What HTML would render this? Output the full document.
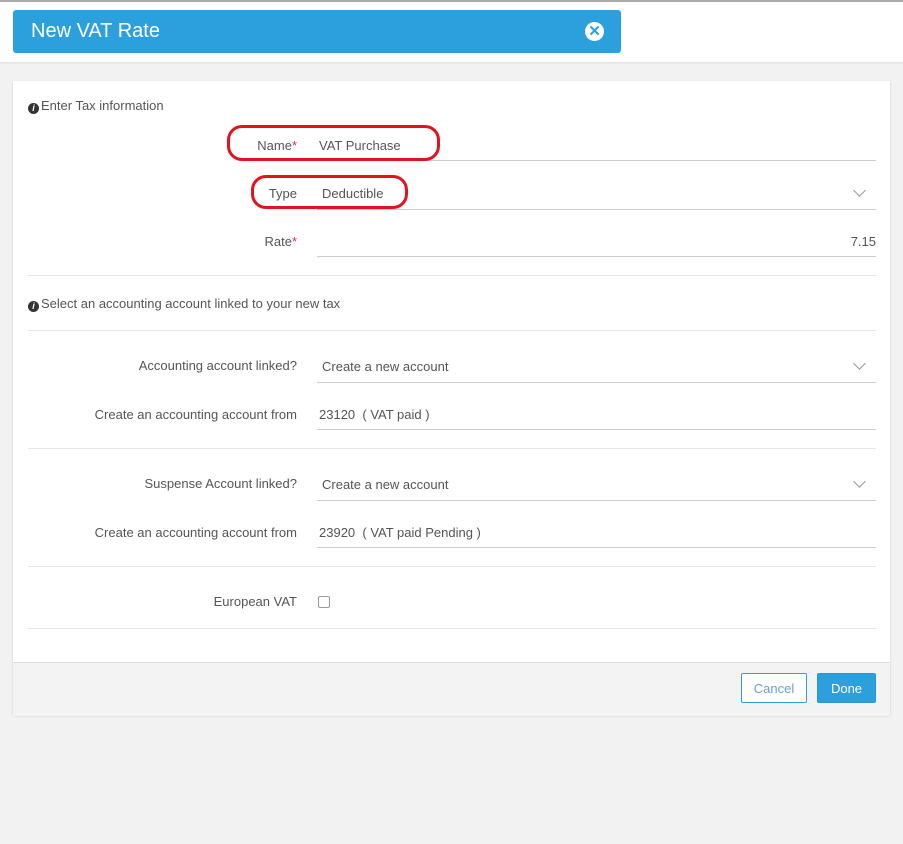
<!DOCTYPE html>
<html><head><style>
body{margin:0;width:903px;height:844px;background:#f2f2f2;font-family:"Liberation Sans",sans-serif;font-size:13px;color:#555;position:relative;overflow:hidden}
.top{position:absolute;left:0;top:0;width:903px;height:62px;background:#fff;border-top:2px solid #aaa;box-sizing:border-box;box-shadow:0 1px 2px #ddd}
.hdr{position:absolute;left:13px;top:10px;width:608px;height:43px;background:#2ca0dd;border-radius:3px;color:#fff;font-size:20px;line-height:43px;padding-left:18px;box-sizing:border-box}
.x{position:absolute;right:17px;top:12px;width:19px;height:19px;border-radius:50%;background:#fff;color:#2ca0dd;font-size:15px;line-height:19px;text-align:center;font-weight:bold}
.card{position:absolute;left:13px;top:81px;width:877px;height:634px;background:#fff;box-shadow:0 1px 2px #ccc}
.foot{position:absolute;left:0;top:581px;width:877px;height:53px;background:#f3f3f3;border-top:1px solid #ddd}
.a{position:absolute}
.lbl{position:absolute;right:593px;text-align:right;white-space:nowrap}
.val{position:absolute;left:309px;white-space:nowrap}
.ul{position:absolute;left:304px;width:559px;height:1px;background:#ccc}
.sep{position:absolute;left:15px;width:848px;height:1px;background:#e6e6e6}
.chev{position:absolute;left:842px;width:8px;height:8px;border-right:1px solid #999;border-bottom:1px solid #999;transform:rotate(45deg)}
.info{display:inline-block;width:11px;height:11px;border-radius:50%;background:#333;color:#fff;font-size:9px;line-height:11px;text-align:center;font-weight:bold;font-style:italic;vertical-align:-1px;margin-right:2px}
.req{color:#d9303a}
.ell{position:absolute;border:3px solid #e0141e;border-radius:15px}
.btn{position:absolute;top:592px;height:30px;line-height:30px;text-align:center;border-radius:2px;box-sizing:border-box}
</style></head><body>
<div class="top"></div>
<div class="hdr">New VAT Rate<div class="x">✕</div></div>
<div class="card">
<div class="a" style="left:15px;top:17px"><span class="info">i</span>Enter Tax information</div>
<div class="lbl" style="top:57px">Name<span class="req">*</span></div><div class="val" style="left:306px;top:57px">VAT Purchase</div><div class="ul" style="top:79px"></div>
<div class="lbl" style="top:105px">Type</div><div class="val" style="top:105px">Deductible</div><div class="ul" style="top:128px"></div><div class="chev" style="top:105px"></div>
<div class="lbl" style="top:153px">Rate<span class="req">*</span></div><div class="a" style="right:14px;top:153px">7.15</div><div class="ul" style="top:175px"></div>
<div class="sep" style="top:194px"></div>
<div class="a" style="left:15px;top:215px"><span class="info">i</span>Select an accounting account linked to your new tax</div>
<div class="sep" style="top:249px"></div>
<div class="lbl" style="top:277px">Accounting account linked?</div><div class="val" style="top:278px">Create a new account</div><div class="ul" style="top:301px"></div><div class="chev" style="top:278px"></div>
<div class="lbl" style="top:326px">Create an accounting account from</div><div class="val" style="left:306px;top:326px">23120 &nbsp;( VAT paid )</div><div class="ul" style="top:348px"></div>
<div class="sep" style="top:367px"></div>
<div class="lbl" style="top:395px">Suspense Account linked?</div><div class="val" style="top:396px">Create a new account</div><div class="ul" style="top:419px"></div><div class="chev" style="top:396px"></div>
<div class="lbl" style="top:444px">Create an accounting account from</div><div class="val" style="left:306px;top:444px">23920 &nbsp;( VAT paid Pending )</div><div class="ul" style="top:466px"></div>
<div class="sep" style="top:485px"></div>
<div class="lbl" style="top:513px">European VAT</div><div class="a" style="left:305px;top:515px;width:10px;height:10px;border:1px solid #999;border-radius:2px"></div>
<div class="sep" style="top:547px"></div>
<div class="foot"></div>
<div class="btn" style="left:728px;width:66px;border:1px solid #2ca0dd;background:#fff;color:#6a9fd8">Cancel</div>
<div class="btn" style="left:804px;width:59px;background:#2ca0dd;color:#fff;border:1px solid #2898d3">Done</div>
</div>
<div class="ell" style="left:227px;top:125px;width:207px;height:30px"></div>
<div class="ell" style="left:251px;top:175px;width:151px;height:28px"></div>
</body></html>
